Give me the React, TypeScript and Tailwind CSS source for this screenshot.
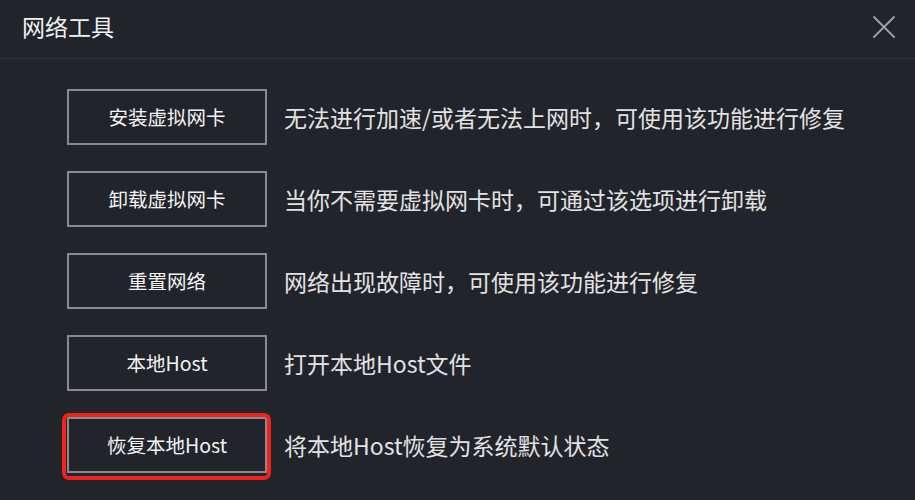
const TOOLS = [
    { label: "安装虚拟网卡", desc: "无法进行加速/或者无法上网时，可使用该功能进行修复" },
    { label: "卸载虚拟网卡", desc: "当你不需要虚拟网卡时，可通过该选项进行卸载" },
    { label: "重置网络", desc: "网络出现故障时，可使用该功能进行修复" },
    { label: "本地Host", desc: "打开本地Host文件" },
    { label: "恢复本地Host", desc: "将本地Host恢复为系统默认状态", marked: true },
];

export default function App() {
    return (
        <div
            className="w-[915px] h-[500px] overflow-hidden bg-[#22242c] text-white"
            style={{ fontFamily: '"Noto Sans CJK SC", "Noto Sans", sans-serif' }}
        >
            {/* Header */}
            <div className="h-[59px] flex items-center justify-between pl-[22px] pr-[20px] border-b border-[#30323a]">
                <span className="text-[23px] leading-none text-[#f2f2f2] -mt-[6px]">网络工具</span>
                <button type="button" className="text-[#a0a2a8] -mt-[4px]">
                    <svg width="22" height="22" viewBox="0 0 22 22" fill="none" stroke="currentColor" strokeWidth="1.8" strokeLinecap="round">
                        <path d="M1 1L21 21M21 1L1 21" />
                    </svg>
                </button>
            </div>

            {/* Tool rows */}
            <div className="flex flex-col gap-[26px] pl-[67px] pt-[30px]">
                {TOOLS.map((tool) => (
                    <div key={tool.label} className="flex items-center gap-[17px]">
                        <div className="relative">
                            <button
                                type="button"
                                className="w-[200px] h-[56px] border-2 border-[#8a8b8f] bg-[#22242c] text-[19.5px] text-[#f4f4f4] flex items-center justify-center"
                            >
                                {tool.label}
                            </button>
                            {tool.marked && (
                                <div className="absolute -left-[5px] -top-[4px] w-[209px] h-[67px] border-[4px] border-[#f0221a] rounded-[7px]" />
                            )}
                        </div>
                        <span className="text-[23px] text-[#e2e2e2]">{tool.desc}</span>
                    </div>
                ))}
            </div>
        </div>
    );
}
